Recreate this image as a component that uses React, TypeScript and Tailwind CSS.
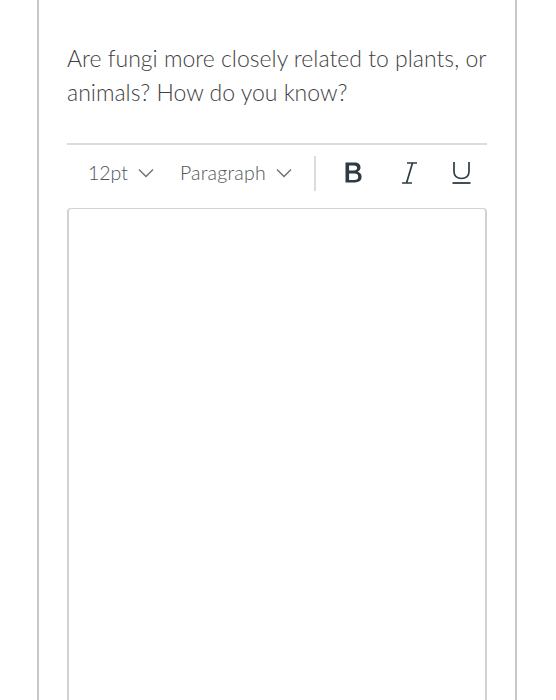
function Chevron() {
  return (
    <svg width="16" height="10" viewBox="0 0 16 10" fill="none">
      <path d="M1 1.5l7 7 7-7" stroke="#6b7275" strokeWidth="1.4" />
    </svg>
  );
}

function BoldIcon() {
  return (
    <svg width="21" height="22" viewBox="0 0 21 22" fill="none">
      <path
        d="M1.5 0.5h9c3.8 0 6 1.8 6 5 0 2-1.1 3.5-2.9 4.2 2.5.6 4 2.4 4 5.1 0 3.6-2.6 5.7-6.8 5.7H1.5V0.5zm3.6 3.1v5h4.9c2 0 3.1-.9 3.1-2.5S12 3.6 10 3.6H5.1zm0 8v6.3h5.5c2.3 0 3.6-1.1 3.6-3.2 0-2-1.3-3.1-3.6-3.1H5.1z"
        fill="#2d3b45"
      />
    </svg>
  );
}

function ItalicIcon() {
  return (
    <svg width="17" height="22" viewBox="0 0 17 22" fill="none">
      <path d="M6 1h10M1 21h10M11.5 1L5.5 21" stroke="#2d3b45" strokeWidth="1.7" />
    </svg>
  );
}

function UnderlineIcon() {
  return (
    <svg width="21" height="22" viewBox="0 0 21 22" fill="none">
      <path
        d="M3 0v9.5c0 4.3 3 7 7.5 7s7.5-2.7 7.5-7V0"
        stroke="#2d3b45"
        strokeWidth="1.7"
      />
      <path d="M1.5 21h18" stroke="#2d3b45" strokeWidth="1.8" />
    </svg>
  );
}

export default function App() {
  return (
    <div className="h-[700px] w-[556px] overflow-hidden bg-white font-['Lato','Open_Sans',sans-serif]">
      <div className="ml-[37px] w-[480px] h-[700px] border-x-2 border-[#c8c8c8] px-[28px] pt-[41px]">
        <p className="text-[23px] font-light leading-[34px] text-[#3f3f3f]">
          Are fungi more closely related to plants, or animals? How do you
          know?
        </p>

        <div className="mt-[34px] border-t-2 border-[#dcdcdc]" />

        <div className="flex h-[63px] items-center pb-[7px] pl-[21px] text-[19.5px] font-light text-[#4f5457]">
          <div className="flex items-center gap-[10px]">
            <span>12pt</span>
            <Chevron />
          </div>
          <div className="ml-[26px] flex items-center gap-[10px]">
            <span className="tracking-[0.2px]">Paragraph</span>
            <Chevron />
          </div>
          <div className="ml-[22px] h-[35px] border-l-2 border-[#dcdcdc]" />
          <div className="ml-[28px] flex items-center">
            <BoldIcon />
            <div className="ml-[36px]">
              <ItalicIcon />
            </div>
            <div className="ml-[33px]">
              <UnderlineIcon />
            </div>
          </div>
        </div>

        <div className="h-[520px] rounded-tl-[4px] rounded-tr-[4px] border border-b-0 border-[#cfd3d6] border-l-2 border-r-2" />
      </div>
    </div>
  );
}
